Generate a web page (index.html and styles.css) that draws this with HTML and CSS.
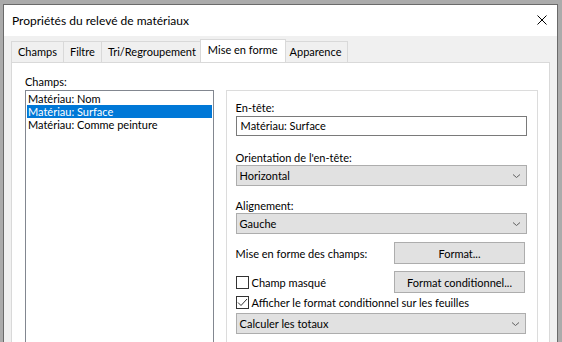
FILE: index.html
```html
<!DOCTYPE html>
<html lang="fr">
<head>
  <meta charset="UTF-8" />
  <title>Propriétés du relevé de matériaux</title>
  <link rel="stylesheet" href="styles.css">
</head>
<body>

  <div class="window">
    <div class="titlebar">
      <span class="title">Propriétés du relevé de matériaux</span>
      <svg class="close" width="10" height="10" viewBox="0 0 10 10"><path d="M0.5 0.5L9.5 9.5M9.5 0.5L0.5 9.5" stroke="#000" stroke-width="1"/></svg>
    </div>

    <div class="content">
      <!-- Onglets -->
      <div class="tabs">
        <div class="tab">Champs</div>
        <div class="tab">Filtre</div>
        <div class="tab">Tri/Regroupement</div>
        <div class="tab active">Mise en forme</div>
        <div class="tab">Apparence</div>
      </div>

      <div class="panel">
        <div class="col-left">
          <div class="label">Champs:</div>
          <ul class="listbox">
            <li>Matériau: Nom</li>
            <li class="selected">Matériau: Surface</li>
            <li>Matériau: Comme peinture</li>
          </ul>
        </div>

        <div class="group">
          <div class="label">En-tête:</div>
          <div class="textbox">Matériau: Surface</div>

          <div class="label gap-l">Orientation de l'en-tête:</div>
          <div class="combo">Horizontal
            <svg width="7" height="4" viewBox="0 0 7 4"><path d="M0 0.5L3.5 3.5L7 0.5" fill="none" stroke="#606060"/></svg>
          </div>

          <div class="label gap-m">Alignement:</div>
          <div class="combo">Gauche
            <svg width="7" height="4" viewBox="0 0 7 4"><path d="M0 0.5L3.5 3.5L7 0.5" fill="none" stroke="#606060"/></svg>
          </div>

          <div class="row row-first">
            <span class="row-text">Mise en forme des champs:</span>
            <button class="btn">Format...</button>
          </div>
          <div class="row">
            <span class="check"><span class="box"></span>Champ masqué</span>
            <button class="btn">Format conditionnel...</button>
          </div>
          <div class="check check-line">
            <span class="box">
              <svg width="11" height="11" viewBox="0 0 11 11"><path d="M1 5.5L4 8.5L10 2" fill="none" stroke="#333" stroke-width="1"/></svg>
            </span>Afficher le format conditionnel sur les feuilles
          </div>
          <div class="combo combo-last">Calculer les totaux
            <svg width="7" height="4" viewBox="0 0 7 4"><path d="M0 0.5L3.5 3.5L7 0.5" fill="none" stroke="#606060"/></svg>
          </div>
        </div>
      </div>
    </div>
  </div>

</body>
</html>
```

FILE: styles.css
```css
body { margin: 0; height: 342px; overflow: hidden; background: #ababab; font-family: 'Segoe UI', 'Lato', sans-serif; font-size: 11px; color: #000; }
.window { margin: 4px 0 0 3px; width: 553px; height: 400px; border: 1px solid #6a6a6a; background: #f0f0f0; }
.titlebar { height: 31px; background: #fff; display: flex; align-items: center; justify-content: space-between; padding: 0 10px 0 8px; }
.title { font-size: 12px; margin-top: -1px; }
.close { margin-top: -1px; }

.content { padding: 3px 7px 0 7px; }
.tabs { display: flex; align-items: flex-end; height: 23px; }
.tab { height: 20px; line-height: 19px; padding: 0 6px; border: 1px solid #d9d9d9; border-bottom: none; border-left: none; background: #f0f0f0; }
.tab:first-child { border-left: 1px solid #d9d9d9; }
.tab.active { height: 22px; line-height: 20px; background: #fff; border-left: 1px solid #d9d9d9; margin: 0 -2px 0 -3px; padding: 0 7px; position: relative; z-index: 1; }
.panel { background: #fff; border: 1px solid #d9d9d9; height: 300px; display: flex; gap: 12px; padding: 11px 11px 0 13px; }

.label { line-height: 15px; }
.col-left { width: 189px; }
.listbox { list-style: none; margin: 1px 0 0; padding: 1px; height: 300px; border: 1px solid #828790; }
.listbox li { height: 13px; line-height: 13px; padding-left: 1px; }
.listbox li.selected { background: #0078d7; color: #fff; }

.group { margin-top: 16px; width: 292px; border: 1px solid #dcdcdc; padding: 9px 10px 0 9px; }
.textbox { margin-top: 1px; height: 18px; line-height: 18px; border: 1px solid #7a7a7a; padding-left: 4px; }
.combo { height: 19px; line-height: 19px; border: 1px solid #adadad; background: #e1e1e1; padding: 0 6px 0 3px; display: flex; justify-content: space-between; align-items: center; }
.gap-l { margin-top: 14px; }
.gap-m { margin-top: 12px; }

.row { display: flex; justify-content: space-between; align-items: center; }
.row-first { margin-top: 8px; }
.row + .row { margin-top: 7px; }
.row-text { color: #000; }
.btn { width: 131px; height: 22px; margin-right: 2px; border: 1px solid #adadad; background: #e1e1e1; font-family: inherit; font-size: 11px; padding: 0; }
.check { display: flex; align-items: center; }
.box { width: 11px; height: 11px; border: 1px solid #333; background: #fff; margin-right: 3px; display: flex; }
.check-line { margin-top: 3px; }
.combo-last { margin-top: 4px; margin-right: 1px; }
```
